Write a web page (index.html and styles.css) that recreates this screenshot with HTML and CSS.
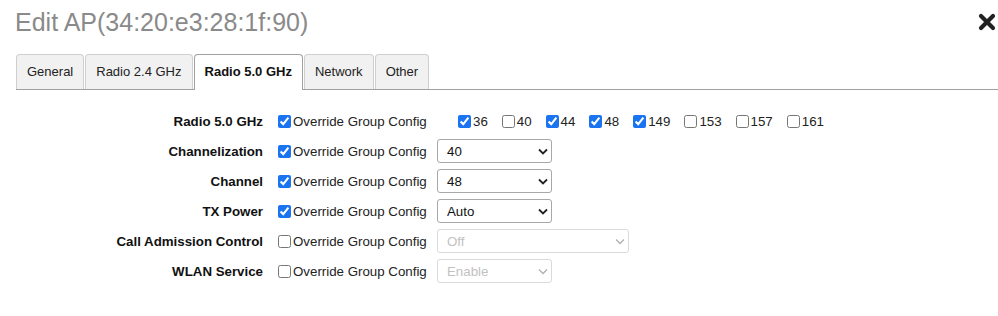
FILE: index.html
```html
<!DOCTYPE html>
<html lang="en">
<head>
  <meta charset="UTF-8" />
  <title>Edit AP</title>
  <link rel="stylesheet" href="styles.css">
</head>
<body>

  <div class="header">
    <h2>Edit AP(34:20:e3:28:1f:90)</h2>
    <button class="close" type="button" aria-label="Close">
      <svg width="18" height="18" viewBox="0 0 18 18"><path d="M3 3L15 15M15 3L3 15" stroke="#222" stroke-width="4.2" stroke-linecap="round"/></svg>
    </button>
  </div>

  <ul class="tabs">
    <li>General</li>
    <li>Radio 2.4 GHz</li>
    <li class="active">Radio 5.0 GHz</li>
    <li>Network</li>
    <li>Other</li>
  </ul>

  <form class="radio-form">
    <label class="name">Radio 5.0 GHz</label>
    <label class="override"><input type="checkbox" checked />Override Group Config</label>
    <div class="channels">
      <label><input type="checkbox" checked />36</label>
      <label><input type="checkbox" />40</label>
      <label><input type="checkbox" checked />44</label>
      <label><input type="checkbox" checked />48</label>
      <label><input type="checkbox" checked />149</label>
      <label><input type="checkbox" />153</label>
      <label><input type="checkbox" />157</label>
      <label><input type="checkbox" />161</label>
    </div>

    <label class="name">Channelization</label>
    <label class="override"><input type="checkbox" checked />Override Group Config</label>
    <span class="select">
      <select><option>40</option></select>
      <svg viewBox="0 0 10 7"><path d="M1 1.5L5 5.5L9 1.5" /></svg>
    </span>

    <label class="name">Channel</label>
    <label class="override"><input type="checkbox" checked />Override Group Config</label>
    <span class="select">
      <select><option>48</option></select>
      <svg viewBox="0 0 10 7"><path d="M1 1.5L5 5.5L9 1.5" /></svg>
    </span>

    <label class="name">TX Power</label>
    <label class="override"><input type="checkbox" checked />Override Group Config</label>
    <span class="select">
      <select><option>Auto</option></select>
      <svg viewBox="0 0 10 7"><path d="M1 1.5L5 5.5L9 1.5" /></svg>
    </span>

    <label class="name">Call Admission Control</label>
    <label class="override"><input type="checkbox" />Override Group Config</label>
    <span class="select wide disabled">
      <select disabled><option>Off</option></select>
      <svg viewBox="0 0 10 7"><path d="M1 1.5L5 5.5L9 1.5" /></svg>
    </span>

    <label class="name">WLAN Service</label>
    <label class="override"><input type="checkbox" />Override Group Config</label>
    <span class="select disabled">
      <select disabled><option>Enable</option></select>
      <svg viewBox="0 0 10 7"><path d="M1 1.5L5 5.5L9 1.5" /></svg>
    </span>
  </form>

</body>
</html>
```

FILE: styles.css
```css
body {
  margin: 0;
  font-family: "Liberation Sans", Arial, sans-serif;
  background: #fff;
  color: #111;
}

.header {
  display: flex;
  justify-content: space-between;
  align-items: flex-start;
  padding: 7px 2px 0 15px;
}

.header h2 {
  margin: 0;
  font-size: 25px;
  line-height: 30px;
  font-weight: normal;
  color: #8a8a8a;
}

.close {
  border: none;
  background: none;
  padding: 0;
  margin-top: 6px;
  width: 18px;
  height: 18px;
  cursor: pointer;
}

.tabs {
  display: flex;
  gap: 1px;
  list-style: none;
  margin: 17px 0 0 16px;
  padding: 0;
  border-bottom: 1px solid #a0a0a0;
}

.tabs li {
  height: 34px;
  line-height: 34px;
  padding: 0 10px;
  font-size: 13px;
  color: #222;
  background: #f1f1f1;
  border: 1px solid #cfcfcf;
  border-bottom: none;
  border-radius: 4px 4px 0 0;
}

.tabs li.active {
  background: #fff;
  font-weight: bold;
  color: #111;
  border-color: #a0a0a0;
  height: 35px;
  margin-bottom: -1px;
}

.radio-form {
  display: grid;
  grid-template-columns: 263px 144px auto;
  grid-auto-rows: 24px;
  column-gap: 15px;
  row-gap: 6px;
  align-items: center;
  justify-items: start;
  margin-top: 19px;
  font-size: 13.3px;
}

.name {
  justify-self: end;
  font-weight: bold;
  color: #111;
}

.override,
.channels label {
  display: flex;
  align-items: center;
  color: #222;
  white-space: nowrap;
}

input[type="checkbox"] {
  width: 13px;
  height: 13px;
  margin: 0 2px 0 0;
  accent-color: #1a73f0;
}

.channels {
  display: flex;
  gap: 14px;
  padding-left: 21px;
}

.select {
  position: relative;
  display: inline-block;
}

.select select {
  appearance: none;
  width: 115px;
  height: 24px;
  padding: 0 0 0 9px;
  border: 1px solid #a8a8a8;
  border-radius: 3px;
  background: #fff;
  font-family: "Liberation Sans", Arial, sans-serif;
  font-size: 13.3px;
  color: #111;
}

.select.wide select {
  width: 192px;
}

.select svg {
  position: absolute;
  right: 4px;
  top: 9px;
  width: 10px;
  height: 7px;
  fill: none;
  stroke: #222;
  stroke-width: 1.8;
  pointer-events: none;
}

.select.disabled select {
  color: #a8a8a8;
  border-color: #cbcbcb;
  background: #fff;
}

.select.disabled svg {
  stroke: #b0b0b0;
  stroke-width: 1.3;
}
```
